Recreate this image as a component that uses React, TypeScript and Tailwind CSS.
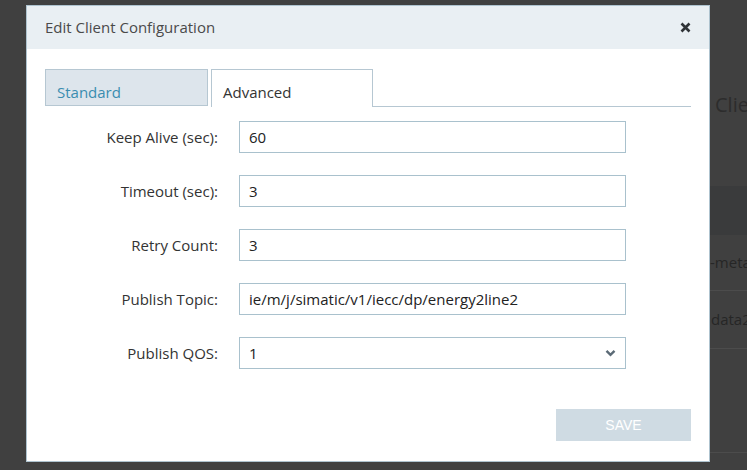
import React from "react";

const font = { fontFamily: '"Open Sans", "Noto Sans", sans-serif' };

function Row({ label, children }: { label: string; children: React.ReactNode }) {
  return (
    <>
      <div className="flex items-center justify-end h-[32px] text-[15px] text-[#333]">{label}</div>
      <div className="h-[32px]">{children}</div>
    </>
  );
}

function TextInput({ value }: { value: string }) {
  return (
    <div className="h-[32px] w-full border border-[#a9c1cd] bg-white flex items-center pl-[9px] text-[15px] text-[#222]">
      {value}
    </div>
  );
}

export default function App() {
  return (
    <div
      className="relative w-[747px] h-[470px] overflow-hidden bg-[#404040]"
      style={font}
    >
      {/* page behind the overlay */}
      <div className="absolute inset-0 flex flex-col pl-[690px]">
        <div className="h-[186px] pt-[95px] pl-[25px] text-[20px] text-[#2c2c2c] leading-none whitespace-nowrap">Clie</div>
        <div className="h-[49px] bg-[#3a3b3c]" />
        <div className="h-[56px] border-b border-[#4c4c4c] flex items-center pl-[20px] text-[15px] text-[#262626] whitespace-nowrap">-meta</div>
        <div className="h-[58px] border-b border-[#4c4c4c] flex items-center pl-[21px] text-[15px] text-[#262626] whitespace-nowrap">data2</div>
        <div className="h-[104px] border-b border-[#4c4c4c]" />
      </div>

      {/* modal */}
      <div className="absolute left-[26px] top-[5px] w-[684px] h-[457px] bg-white border border-[#aec3cf] flex flex-col">
        <div className="h-[43px] bg-[#e9eff3] flex items-center justify-between pl-[18px] pr-[18px]">
          <span className="text-[15px] text-[#4a4a4a]">Edit Client Configuration</span>
          <svg width="11" height="11" viewBox="0 0 11 11" className="mt-[-1px]">
            <path d="M1.5 1.5 L9.5 9.5 M9.5 1.5 L1.5 9.5" stroke="#2f3337" strokeWidth="2.6" strokeLinecap="butt" />
          </svg>
        </div>

        <div className="flex flex-col pl-[18px] pr-[18px] pt-[20px]">
          {/* tabs */}
          <div className="flex items-end">
            <div className="w-[163px] h-[37px] mb-[1px] border border-[#b6c7d2] bg-[#dde5ec] pl-[11px] pt-[12px] text-[15px] text-[#3a8db0] leading-[20px]">
              Standard
            </div>
            <div className="w-[3px]" />
            <div className="w-[162px] h-[38px] border border-b-0 border-[#b6c7d2] bg-white pl-[11px] pt-[12px] text-[15px] text-[#333] leading-[20px]">
              Advanced
            </div>
            <div className="flex-1 border-b border-[#b6c7d2]" />
          </div>

          {/* form */}
          <div className="grid grid-cols-[173px_387px] gap-x-[21px] gap-y-[22px] mt-[14px]">
            <Row label="Keep Alive (sec):"><TextInput value="60" /></Row>
            <Row label="Timeout (sec):"><TextInput value="3" /></Row>
            <Row label="Retry Count:"><TextInput value="3" /></Row>
            <Row label="Publish Topic:"><TextInput value="ie/m/j/simatic/v1/iecc/dp/energy2line2" /></Row>
            <Row label="Publish QOS:">
              <div className="h-[32px] w-full border border-[#a9c1cd] bg-white flex items-center justify-between pl-[9px] pr-[9px] text-[15px] text-[#222]">
                <span>1</span>
                <svg width="11" height="8" viewBox="0 0 11 8">
                  <path d="M1.5 1.8 L5.5 5.8 L9.5 1.8" fill="none" stroke="#5b6a76" strokeWidth="2.4" />
                </svg>
              </div>
            </Row>
          </div>

          <div className="flex justify-end mt-[40px]">
            <button
              className="w-[135px] h-[32px] bg-[#cfdbe3] text-white text-[14px]"
              style={{ fontFamily: '"Liberation Sans", Arial, sans-serif' }}
            >
              SAVE
            </button>
          </div>
        </div>
      </div>
    </div>
  );
}
